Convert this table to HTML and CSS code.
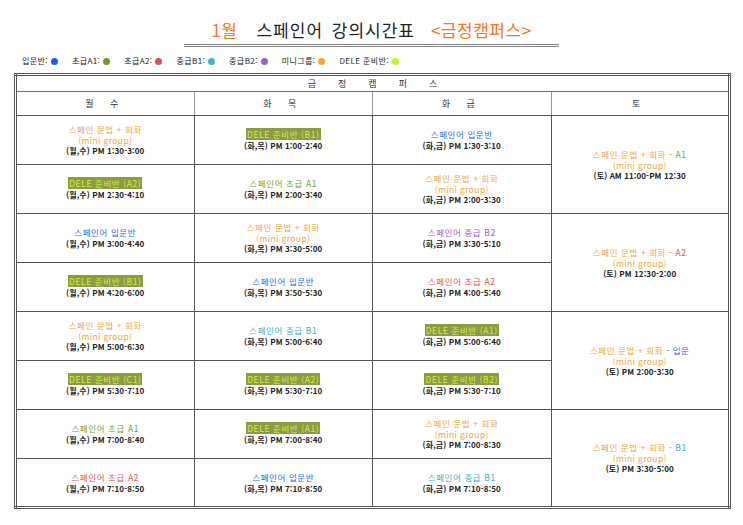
FILE: index.html
```html
<!DOCTYPE html>
<html lang="ko">
<head>
<meta charset="utf-8">
<title>1월 스페인어 강의시간표</title>
<link rel="stylesheet" href="styles.css">
</head>
<body>
<div class="page">
  <header class="title-wrap">
    <h1 class="title"><span class="or">1월</span><span class="mid">스페인어 강의시간표</span><span class="or">&lt;금정캠퍼스&gt;</span></h1>
  </header>
  <ul class="legend">
    <li>입문반:<i class="dot c-blue"></i></li>
    <li>초급A1:<i class="dot c-green"></i></li>
    <li>초급A2:<i class="dot c-red"></i></li>
    <li>중급B1:<i class="dot c-teal"></i></li>
    <li>중급B2:<i class="dot c-purple"></i></li>
    <li>미니그룹:<i class="dot c-orange"></i></li>
    <li>DELE 준비반:<i class="dot c-lime"></i></li>
  </ul>
  <table class="tt">
    <colgroup><col><col><col><col></colgroup>
    <thead>
      <tr class="h1"><th colspan="4"><span class="spread">금정캠퍼스</span></th></tr>
      <tr class="h2"><th>월 수</th><th>화 목</th><th>화 금</th><th>토</th></tr>
    </thead>
    <tbody>
      <tr>
        <td><div class="t o">스페인 문법 + 회화</div><div class="m o">(mini group)</div><div class="tm">(월,수) PM 1:30-3:00</div></td>
        <td><div class="t"><span class="dele">DELE 준비반 (B1)</span></div><div class="tm">(화,목) PM 1:00-2:40</div></td>
        <td><div class="t b">스페인어 입문반</div><div class="tm">(화,금) PM 1:30-3:10</div></td>
        <td rowspan="2"><div class="t o">스페인 문법 + 회화 <span class="g">- A1</span></div><div class="m o">(mini group)</div><div class="tm">(토) AM 11:00-PM 12:30</div></td>
      </tr>
      <tr>
        <td><div class="t"><span class="dele">DELE 준비반 (A2)</span></div><div class="tm">(월,수) PM 2:30-4:10</div></td>
        <td><div class="t g">스페인어 초급 A1</div><div class="tm">(화,목) PM 2:00-3:40</div></td>
        <td><div class="t o">스페인 문법 + 회화</div><div class="m o">(mini group)</div><div class="tm">(화,금) PM 2:00-3:30</div></td>
      </tr>
      <tr>
        <td><div class="t b">스페인어 입문반</div><div class="tm">(월,수) PM 3:00-4:40</div></td>
        <td><div class="t o">스페인 문법 + 회화</div><div class="m o">(mini group)</div><div class="tm">(화,목) PM 3:30-5:00</div></td>
        <td><div class="t p">스페인어 중급 B2</div><div class="tm">(화,금) PM 3:30-5:10</div></td>
        <td rowspan="2"><div class="t o">스페인 문법 + 회화 <span class="r">- A2</span></div><div class="m o">(mini group)</div><div class="tm">(토) PM 12:30-2:00</div></td>
      </tr>
      <tr>
        <td><div class="t"><span class="dele">DELE 준비반 (B1)</span></div><div class="tm">(월,수) PM 4:20-6:00</div></td>
        <td><div class="t b">스페인어 입문반</div><div class="tm">(화,목) PM 3:50-5:30</div></td>
        <td><div class="t r">스페인어 초급 A2</div><div class="tm">(화,금) PM 4:00-5:40</div></td>
      </tr>
      <tr>
        <td><div class="t o">스페인 문법 + 회화</div><div class="m o">(mini group)</div><div class="tm">(월,수) PM 5:00-6:30</div></td>
        <td><div class="t tl">스페인어 중급 B1</div><div class="tm">(화,목) PM 5:00-6:40</div></td>
        <td><div class="t"><span class="dele">DELE 준비반 (A1)</span></div><div class="tm">(화,금) PM 5:00-6:40</div></td>
        <td rowspan="2"><div class="t o">스페인 문법 + 회화 <span class="b">- 입문</span></div><div class="m o">(mini group)</div><div class="tm">(토) PM 2:00-3:30</div></td>
      </tr>
      <tr>
        <td><div class="t"><span class="dele">DELE 준비반 (C1)</span></div><div class="tm">(월,수) PM 5:30-7:10</div></td>
        <td><div class="t"><span class="dele">DELE 준비반 (A2)</span></div><div class="tm">(화,목) PM 5:30-7:10</div></td>
        <td><div class="t"><span class="dele">DELE 준비반 (B2)</span></div><div class="tm">(화,금) PM 5:30-7:10</div></td>
      </tr>
      <tr>
        <td><div class="t g">스페인어 초급 A1</div><div class="tm">(월,수) PM 7:00-8:40</div></td>
        <td><div class="t"><span class="dele">DELE 준비반 (A1)</span></div><div class="tm">(화,목) PM 7:00-8:40</div></td>
        <td><div class="t o">스페인 문법 + 회화</div><div class="m o">(mini group)</div><div class="tm">(화,금) PM 7:00-8:30</div></td>
        <td rowspan="2"><div class="t o">스페인 문법 + 회화 <span class="tl">- B1</span></div><div class="m o">(mini group)</div><div class="tm">(토) PM 3:30-5:00</div></td>
      </tr>
      <tr>
        <td><div class="t r">스페인어 초급 A2</div><div class="tm">(월,수) PM 7:10-8:50</div></td>
        <td><div class="t b">스페인어 입문반</div><div class="tm">(화,목) PM 7:10-8:50</div></td>
        <td><div class="t tl">스페인어 중급 B1</div><div class="tm">(화,금) PM 7:10-8:50</div></td>
      </tr>
    </tbody>
  </table>
</div>
</body>
</html>
```
FILE: styles.css
```css
* { box-sizing: border-box; }
html, body { margin: 0; padding: 0; background: #fff; }
body {
  font-family: "Noto Sans CJK KR", "Noto Sans", "Liberation Sans", sans-serif;
  color: #222;
}
.page { padding: 0 12px 0 14px; width: 743px; }

.title-wrap { display: flex; justify-content: center; padding-top: 20px; }
.title {
  margin: 0 0 0 -2px;
  width: 375px;
  font-size: 17px;
  font-weight: 400;
  line-height: 20px;
  text-align: center;
  padding-bottom: 4px;
  border-bottom: 3px double #888;
  white-space: nowrap;
}
.title .or { color: #ff7424; letter-spacing: 0.5px; }
.title .mid { color: #222; margin: 0 16px 0 19px; letter-spacing: 1px; word-spacing: 3px; }

.legend {
  list-style: none;
  margin: 8px 0 0 8px;
  padding: 0;
  display: flex;
  gap: 14px;
  font-size: 8px;
  line-height: 12px;
  height: 12px;
  align-items: center;
  letter-spacing: 0.4px;
}
.legend li { display: flex; align-items: center; }
.dot { display: inline-block; width: 7px; height: 7px; border-radius: 50%; margin-left: 3px; }
.c-blue { background: #1f5ef0; }
.c-green { background: #6d9c2e; }
.c-red { background: #d45656; }
.c-teal { background: #49b2c2; }
.c-purple { background: #9c5fc9; }
.c-orange { background: #f0aa36; }
.c-lime { background: #c4f42a; }

.tt {
  margin-top: 6px;
  width: 717px;
  border-collapse: collapse;
  table-layout: fixed;
  border: 3px double #555;
}
.tt th, .tt td {
  border: 1px solid #555;
  text-align: center;
  vertical-align: middle;
  padding: 0;
}
.tt th { font-weight: 400; font-size: 9px; color: #333; }
.h1 th { height: 17px; border-bottom: 1px solid #777; }
.h2 th { height: 24px; border-color: #999; border-bottom-color: #555; letter-spacing: 7px; }
.spread { letter-spacing: 22px; padding-left: 22px; }
.tt tbody td { height: 49px; }

.t { font-size: 8.5px; line-height: 11px; letter-spacing: 0.6px; white-space: nowrap; }
.m { font-size: 8.5px; line-height: 10px; letter-spacing: 0.4px; }
.tm { font-size: 8px; line-height: 11px; color: #222; font-weight: 700; letter-spacing: 0.1px; }

.o { color: #f0a838; }
.b { color: #2a6af0; }
.g { color: #74a430; }
.r { color: #e05858; }
.tl { color: #3eb0c0; }
.p { color: #a060c8; }
.dele { background: #8e9a48; color: #ccf230; padding: 0 1px; }
```
